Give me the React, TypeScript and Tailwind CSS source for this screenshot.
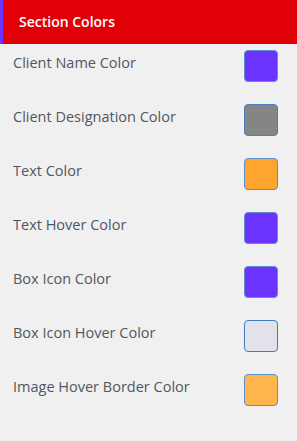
import React from "react";

const rows: { label: string; color: string; border: string }[] = [
  { label: "Client Name Color", color: "bg-[#6c33ff]", border: "border-[#5b8fd0]" },
  { label: "Client Designation Color", color: "bg-[#858585]", border: "border-[#4d7fc0]" },
  { label: "Text Color", color: "bg-[#ffa52e]", border: "border-[#5b8fd0]" },
  { label: "Text Hover Color", color: "bg-[#6c33ff]", border: "border-[#5b8fd0]" },
  { label: "Box Icon Color", color: "bg-[#6c33ff]", border: "border-[#5b8fd0]" },
  { label: "Box Icon Hover Color", color: "bg-[#e2e2ea]", border: "border-[#3f7cc4]" },
  { label: "Image Hover Border Color", color: "bg-[#ffb64c]", border: "border-[#5b8fd0]" },
];

export default function App() {
  return (
    <div
      className="w-[297px] h-[441px] bg-[#f0f0f0] overflow-hidden"
      style={{ fontFamily: '"Open Sans", "Noto Sans", sans-serif' }}
    >
      <div className="flex h-[44px] bg-[#e10008]">
        <div className="w-[3px] bg-[#6c33ff]" />
        <div className="flex items-center pl-[16px] text-[14px] font-semibold text-white leading-[20px]">
          Section Colors
        </div>
      </div>
      <div className="flex flex-col">
        {rows.map((r) => (
          <div key={r.label} className="flex h-[54px] items-start justify-between pl-[13px] pr-[19px] pt-[6px]">
            <div className="mt-[3px] text-[14.5px] leading-[20px] text-[#50575e]">{r.label}</div>
            <div className={`w-[34px] h-[32px] rounded-[4px] border ${r.border} ${r.color}`} />
          </div>
        ))}
      </div>
    </div>
  );
}
